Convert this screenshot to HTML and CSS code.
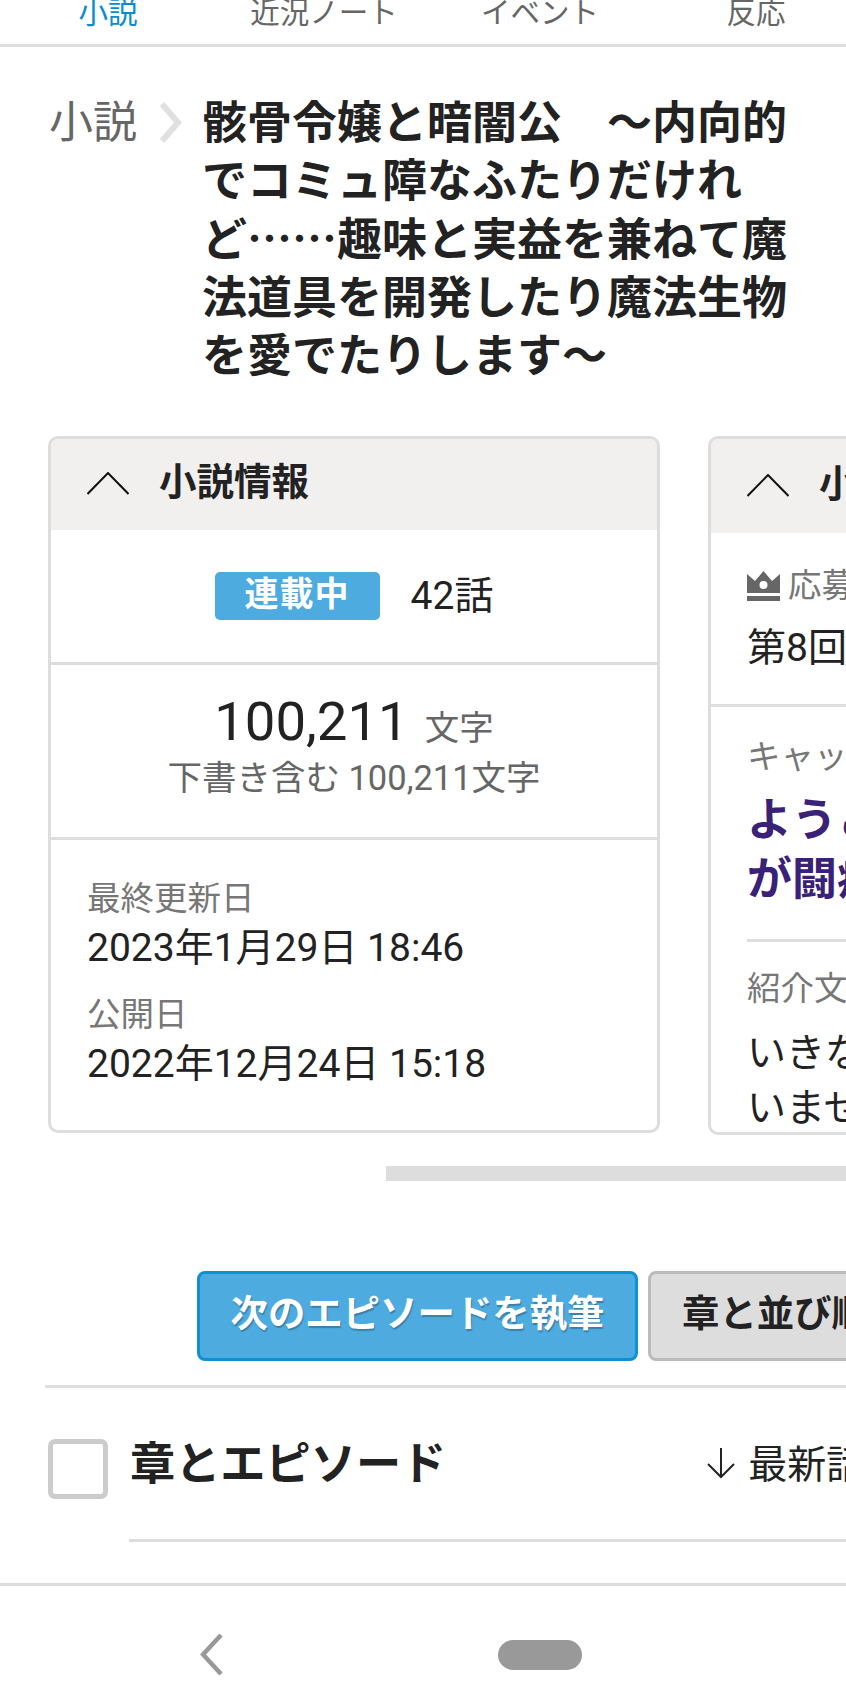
FILE: index.html
```html
<!DOCTYPE html>
<html lang="ja">
<head>
  <meta charset="UTF-8">
  <title>小説</title>
  <link rel="stylesheet" href="styles.css">
</head>
<body>

  <nav class="tabs">
    <a class="tab tab-active">小説</a>
    <a class="tab">近況ノート</a>
    <a class="tab">イベント</a>
    <a class="tab">反応</a>
  </nav>

  <div class="crumb">
    <span class="crumb-parent">小説</span>
    <svg class="crumb-arrow" viewBox="0 0 24 41"><path d="M4 2 L20 20.5 L4 39" /></svg>
    <h1 class="crumb-title">骸骨令嬢と暗闇公　～内向的でコミュ障なふたりだけれど……趣味と実益を兼ねて魔法道具を開発したり魔法生物を愛でたりします～</h1>
  </div>

  <div class="cards">
    <section class="card card-info">
      <header class="card-head">
        <svg class="caret" viewBox="0 0 42 23"><path d="M0.500 22 L21 1 L41.500 22" /></svg>
        <h2>小説情報</h2>
      </header>
      <div class="row row-status">
        <span class="badge">連載中</span>
        <span class="episodes">42話</span>
      </div>
      <div class="row row-count">
        <p class="count"><span class="count-num">100,211</span><span class="count-unit">文字</span></p>
        <p class="count-sub">下書き含む 100,211文字</p>
      </div>
      <div class="row row-dates">
        <p class="label">最終更新日</p>
        <p class="date">2023年1月29日 18:46</p>
        <p class="label label-second">公開日</p>
        <p class="date">2022年12月24日 15:18</p>
      </div>
    </section>

    <section class="card card-detail">
      <header class="card-head card-head-tall">
        <svg class="caret" viewBox="0 0 42 23"><path d="M0.500 22 L21 1 L41.500 22" /></svg>
        <h2>小説の詳細</h2>
      </header>
      <div class="row row-contest">
        <p class="label label-icon">
          <svg class="crown" viewBox="0 0 33 30"><path d="M0 3 L8 10 L16.500 0 L25 10 L33 3 V22 H0 Z M16.500 10 A4 4 0 1 0 16.500 18 A4 4 0 1 0 16.500 10 Z M0 25 H33 V30 H0 Z" /></svg>
          応募
        </p>
        <p class="contest-name">第8回カクヨムコンテスト</p>
      </div>
      <div class="row row-about">
        <p class="label">キャッチコピー</p>
        <p class="catch">ようこそ、骨と闇<br>が闘病する世界へ</p>
        <hr class="rule">
        <p class="label label-intro">紹介文</p>
        <p class="intro">いきなり婚約破棄をされて<br>いませんでした</p>
      </div>
    </section>
  </div>

  <div class="scrollbar"></div>

  <div class="actions">
    <a class="btn btn-primary">次のエピソードを執筆</a>
    <a class="btn btn-plain">章と並び順を編集</a>
  </div>

  <div class="section-head">
    <span class="check"></span>
    <div class="section-main">
      <div class="section-line">
        <h2>章とエピソード</h2>
        <span class="sort">
          <svg class="sort-arrow" viewBox="0 0 30 32"><path d="M15 1 V30 M2 17 L15 30 L28 17" /></svg>
          最新話から
        </span>
      </div>
    </div>
  </div>

  <div class="system-nav">
    <svg class="nav-back" viewBox="0 0 23 41"><path d="M21 1 L3 20.500 L21 40" /></svg>
    <span class="nav-home"></span>
  </div>

</body>
</html>
```

FILE: styles.css
```css
html, body {
  margin: 0;
  height: 1692px;
  overflow: hidden;
  background: #fff;
}

body {
  font-family: Roboto, "Noto Sans CJK JP", sans-serif;
  color: #222;
}

p, h1, h2 {
  margin: 0;
}

/* tabs, cut off by the top of the screen */
.tabs {
  display: grid;
  grid-template-columns: repeat(4, 216px);
  height: 44px;
  border-bottom: 3px solid #ddd;
  overflow: hidden;
  font-size: 29.500px;
  line-height: 36px;
  color: #666;
  white-space: nowrap;
}

.tab {
  text-align: center;
  margin-top: -5px;
}

.tab-active {
  color: #0a8ccf;
}

/* breadcrumb + title */
.crumb {
  display: flex;
  align-items: flex-start;
  padding: 47px 50px 0 49px;
}

.crumb-parent {
  font-size: 44px;
  line-height: 58px;
  color: #666;
  flex: none;
}

.crumb-arrow {
  width: 24px;
  height: 41px;
  margin: 8px 20px 0 21px;
  flex: none;
  fill: none;
  stroke: #e0e0e0;
  stroke-width: 6;
}

.crumb-title {
  font-family: "Noto Sans CJK JP", sans-serif;
  font-size: 45px;
  line-height: 58.300px;
  font-weight: 700;
  color: #222;
  width: 590px;
  flex: none;
  margin: -3px 0 3px;
}

/* horizontally scrolling cards */
.cards {
  display: flex;
  align-items: flex-start;
  gap: 48px;
  margin-top: 50.500px;
  padding-left: 48px;
  overflow: hidden;
}

.card {
  flex: none;
  box-sizing: border-box;
  border: 3px solid #ddd;
  border-radius: 10px;
  overflow: hidden;
}

.card-info {
  width: 612px;
  height: 697px;
}

.card-detail {
  width: 600px;
  height: 699px;
}

.card-head {
  display: flex;
  align-items: center;
  height: 91px;
  background: #f1f0ef;
  padding-left: 36px;
}

.card-head-tall {
  height: 94px;
}

.card-head h2 {
  font-size: 37.500px;
  font-weight: 700;
  margin: 0 0 11px 30px;
}

.caret {
  width: 42px;
  height: 23px;
  fill: none;
  stroke: #111;
  stroke-width: 2;
  margin-top: -1px;
}

.row {
  border-bottom: 3px solid #ddd;
  box-sizing: border-box;
}

.row-status {
  display: flex;
  align-items: center;
  justify-content: center;
  height: 135px;
  gap: 31px;
}

.badge {
  width: 165px;
  height: 48px;
  background: #4dabe0;
  border-radius: 5px;
  color: #fff;
  font-size: 34px;
  font-weight: 700;
  letter-spacing: 1px;
  line-height: 44px;
  text-align: center;
}

.episodes {
  font-size: 39px;
  line-height: 48px;
}

.row-count {
  height: 175px;
  text-align: center;
  padding-top: 31px;
}

.count {
  line-height: 50px;
}

.count-num {
  font-size: 54.500px;
}

.count-unit {
  font-size: 34.500px;
  color: #666;
  margin-left: 16px;
}

.count-sub {
  font-size: 34.500px;
  line-height: 36px;
  color: #666;
}

.row-dates {
  border-bottom: none;
  padding: 36px 36px 0;
}

.label {
  font-size: 33.500px;
  line-height: 46px;
  color: #777;
}

.label-second {
  margin-top: 18px;
}

.date {
  font-size: 39px;
  line-height: 52px;
}

.row-contest {
  height: 174px;
  padding: 30px 36px 0;
  white-space: nowrap;
}

.label-icon {
  display: flex;
  align-items: center;
  gap: 8px;
}

.crown {
  width: 33px;
  height: 30px;
  fill: #666;
  flex: none;
}

.contest-name {
  font-size: 39px;
  line-height: 52px;
  margin-top: 13px;
}

.row-about {
  border-bottom: none;
  padding: 27px 36px 0;
  white-space: nowrap;
}

.catch {
  font-size: 45px;
  line-height: 59px;
  font-weight: 700;
  color: #3a2178;
  margin-top: 11px;
}

.rule {
  border: none;
  height: 3px;
  background: #ddd;
  margin: 30px 0 0;
}

.label-intro {
  margin-top: 24px;
}

.intro {
  font-size: 39px;
  line-height: 55px;
  margin-top: 14px;
}

.scrollbar {
  height: 15px;
  margin: 31px 0 0 386px;
  background: #ddd;
}

/* buttons */
.actions {
  display: flex;
  gap: 10px;
  margin-top: 90px;
  padding-left: 197px;
  white-space: nowrap;
}

.btn {
  flex: none;
  box-sizing: border-box;
  height: 90px;
  border-radius: 8px;
  border: 3px solid;
  font-size: 37.400px;
  font-weight: 700;
  line-height: 80px;
}

.btn-primary {
  width: 441px;
  text-align: center;
  background: #4dabe0;
  border-color: #0f90d2;
  color: #fff;
  text-shadow: 1px 2px 1px rgba(0, 0, 0, 0.25);
}

.btn-plain {
  padding: 0 31px;
  background: #ddd;
  border-color: #bbb;
  color: #222;
}

/* chapter list head */
.section-head {
  display: flex;
  margin: 24px 0 0 45px;
  border-top: 3px solid #ddd;
  padding: 51px 0 0 3px;
}

.check {
  flex: none;
  box-sizing: border-box;
  width: 60px;
  height: 60px;
  border: 5px solid #ccc;
  border-radius: 7px;
}

.section-main {
  flex: 1;
  margin-left: 21px;
  border-bottom: 3px solid #ddd;
  height: 100px;
}

.section-line {
  display: flex;
  align-items: center;
  padding-left: 1px;
  height: 44px;
  white-space: nowrap;
}

.section-line h2 {
  font-size: 45.200px;
  font-weight: 700;
  margin-right: 260px;
  flex: none;
}

.sort {
  display: flex;
  align-items: center;
  gap: 12px;
  font-size: 39px;
  flex: none;
}

.sort-arrow {
  width: 30px;
  height: 32px;
  fill: none;
  stroke: #222;
  stroke-width: 2;
  margin-top: 4px;
}

/* android nav bar */
.system-nav {
  position: relative;
  margin-top: 41px;
  height: 106px;
  border-top: 3px solid #ddd;
}

.nav-back {
  position: absolute;
  left: 200px;
  top: 48px;
  width: 23px;
  height: 41px;
  fill: none;
  stroke: #999;
  stroke-width: 4.500;
}

.nav-home {
  position: absolute;
  left: 498px;
  top: 54px;
  width: 84px;
  height: 30px;
  border-radius: 15px;
  background: #999;
}
```
